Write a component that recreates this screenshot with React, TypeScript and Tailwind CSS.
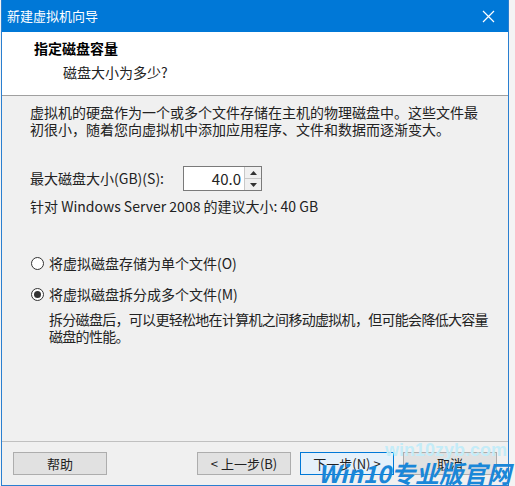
import React from 'react';

const font = { fontFamily: '"Noto Sans CJK SC", "Noto Sans", sans-serif' };

const Radio = ({ checked }: { checked?: boolean }) => (
  <span className="w-[13px] h-[13px] rounded-full border border-[#333] bg-white flex items-center justify-center flex-shrink-0">
    {checked && <span className="w-[7px] h-[7px] rounded-full bg-[#333]" />}
  </span>
);

const Btn = ({ label, focused }: { label: string; focused?: boolean }) => (
  <button
    className={`w-[94px] h-[23px] text-[13px] leading-none text-[#222] border ${
      focused ? 'border-[#0078d7] bg-[#e5f1fb]' : 'border-[#adadad] bg-[#e1e1e1]'
    }`}
  >
    {label}
  </button>
);

export default function App() {
  return (
    <div className="w-[515px] h-[486px] bg-[#f4f4f4] relative overflow-hidden" style={font}>
      <div className="w-[508px] h-[486px] ml-[1px] border-x border-b border-[#2a7fd0] bg-[#f0f0f0] flex flex-col">
        {/* title bar */}
        <div className="h-[32px] bg-[#0078d7] flex items-center justify-between pl-[5px] pr-[12px] text-white">
          <span className="text-[13px]">新建虚拟机向导</span>
          <svg width="13" height="13" viewBox="0 0 13 13" className="mr-[1px]">
            <path d="M1 1 L12 12 M12 1 L1 12" stroke="#ffffff" strokeWidth="1.2" />
          </svg>
        </div>

        {/* header */}
        <div className="h-[64px] bg-white border-b border-[#a0a0a0] pt-[6px]">
          <div className="pl-[32px] text-[14px] font-bold text-black leading-[20px]">指定磁盘容量</div>
          <div className="pl-[61px] text-[14px] text-[#222] leading-[20px] mt-[4px]">磁盘大小为多少?</div>
        </div>

        {/* body */}
        <div className="flex-1 px-[28px] pt-[8px] text-[14px] text-[#222] leading-[17px] whitespace-nowrap">
          <p>虚拟机的硬盘作为一个或多个文件存储在主机的物理磁盘中。这些文件最</p>
          <p>初很小，随着您向虚拟机中添加应用程序、文件和数据而逐渐变大。</p>

          <div className="flex items-center mt-[28px]">
            <span className="w-[153px]">最大磁盘大小(GB)(S):</span>
            <div className="flex items-center h-[25px] w-[79px] border border-[#7a7a7a] bg-white">
              <span className="flex-1 text-right pr-[3px] text-[15px]">40.0</span>
              <div className="w-[17px] h-full flex flex-col border-l border-[#c8c8c8]">
                <div className="flex-1 flex items-center justify-center bg-[#f0f0f0] border-b border-[#c8c8c8]">
                  <svg width="7" height="4" viewBox="0 0 7 4"><path d="M0 4 L3.5 0 L7 4 Z" fill="#333" /></svg>
                </div>
                <div className="flex-1 flex items-center justify-center bg-[#f0f0f0]">
                  <svg width="7" height="4" viewBox="0 0 7 4"><path d="M0 0 L3.5 4 L7 0 Z" fill="#333" /></svg>
                </div>
              </div>
            </div>
          </div>
          <p className="mt-[7px]">针对 Windows Server 2008 的建议大小: 40 GB</p>

          <div className="flex items-center gap-[5px] mt-[40px] pl-[1px]">
            <Radio />
            <span>将虚拟磁盘存储为单个文件(O)</span>
          </div>
          <div className="flex items-center gap-[5px] mt-[14px] pl-[1px]">
            <Radio checked />
            <span>将虚拟磁盘拆分成多个文件(M)</span>
          </div>
          <div className="pl-[19px] mt-[8px] tracking-[-0.7px]">
            <p>拆分磁盘后，可以更轻松地在计算机之间移动虚拟机，但可能会降低大容量</p>
            <p>磁盘的性能。</p>
          </div>
        </div>

        {/* footer */}
        <div className="h-[44px] border-t border-[#c0c0c0] flex items-start pt-[10px] px-[11px]">
          <Btn label="帮助" />
          <div className="flex-1" />
          <div className="flex gap-[9px]">
            <Btn label="< 上一步(B)" />
            <Btn label="下一步(N) >" focused />
            <Btn label="取消" />
          </div>
        </div>
      </div>

      {/* watermark */}
      <div className="absolute right-[4px] bottom-[1px] flex flex-col items-end pointer-events-none">
        <span className="text-[18px] font-bold text-[#c4ecf8] leading-none mr-[4px]" style={{ fontFamily: '"Liberation Sans", sans-serif' }}>
          win10zyb.com
        </span>
        <span className="text-[24px] font-bold italic text-[#1a87d8] leading-none mt-[2px]">Win10专业版官网</span>
      </div>
    </div>
  );
}
